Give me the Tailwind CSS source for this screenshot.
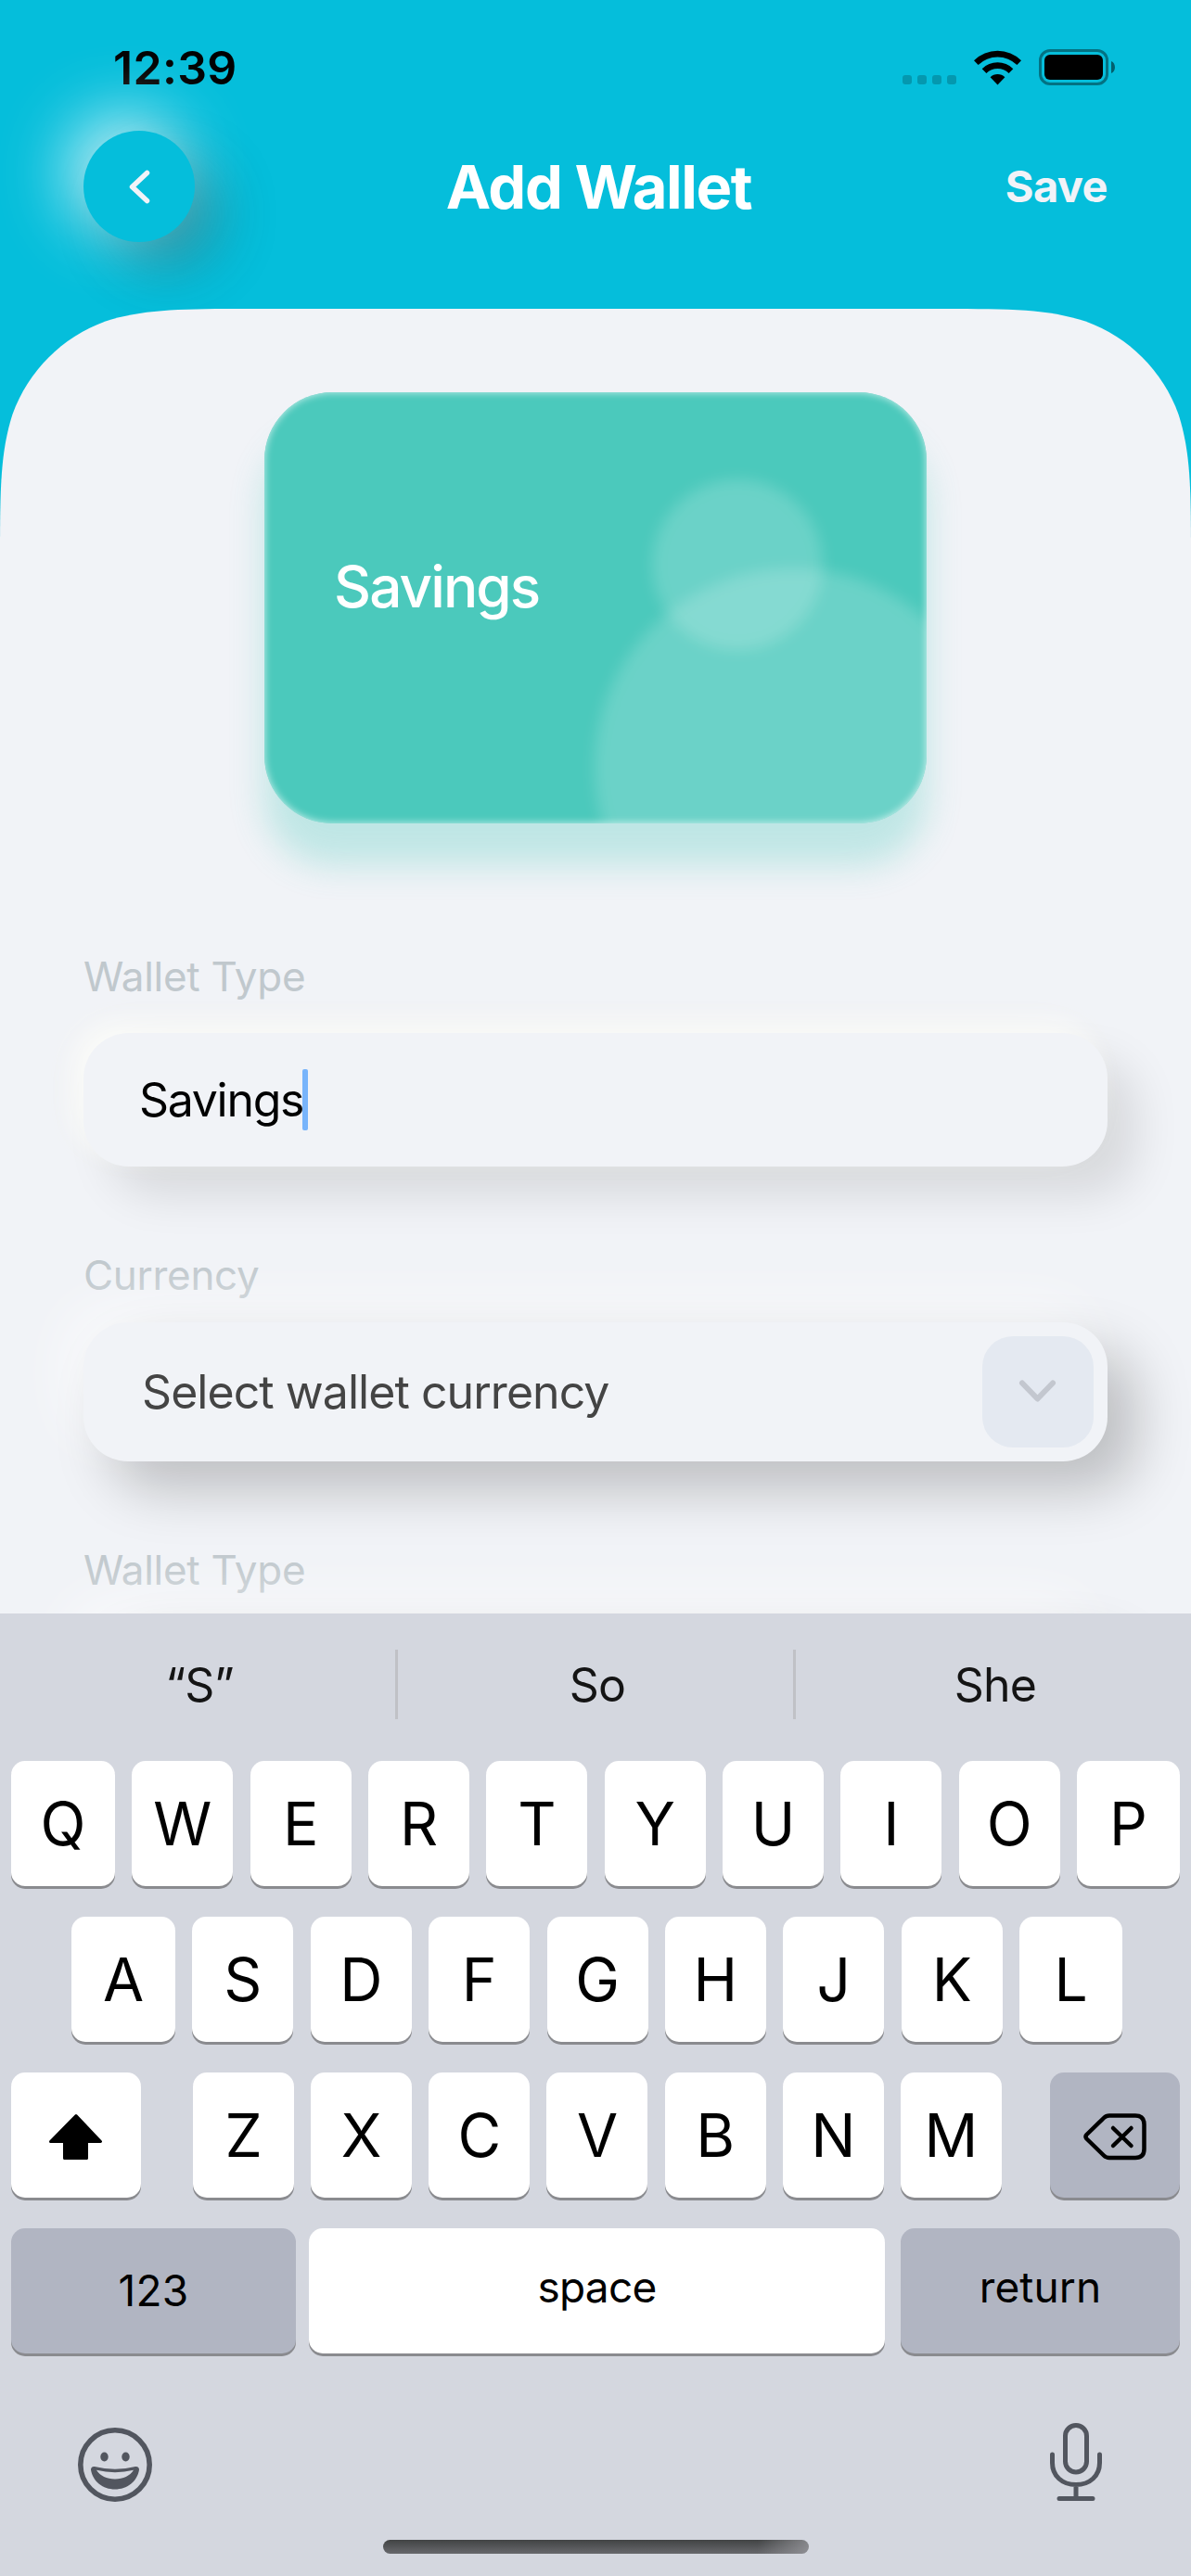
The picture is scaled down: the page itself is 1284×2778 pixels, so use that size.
<!DOCTYPE html>
<html lang="en">
<head>
<meta charset="utf-8">
<title>Add Wallet</title>
<script src="https://cdn.jsdelivr.net/npm/@tailwindcss/browser@4"></script>
</head>
<body class="flex h-[2778px] w-[1284px] flex-col overflow-hidden bg-[#05bedb] font-['Inter','Liberation_Sans',sans-serif]">

<!-- Status bar -->
<div class="flex h-[141px] shrink-0 items-start justify-between pr-[82px] pl-[122px]">
  <div class="pt-[43px] text-[50px] leading-[60px] font-semibold tracking-[0.3px] text-black">12:39</div>
  <div class="flex pt-[53px]">
    <div class="mt-[28px] flex gap-[6px]">
      <span class="size-[10px] rounded-[3px] bg-black/20"></span>
      <span class="size-[10px] rounded-[3px] bg-black/20"></span>
      <span class="size-[10px] rounded-[3px] bg-black/20"></span>
      <span class="size-[10px] rounded-[3px] bg-black/20"></span>
    </div>
    <svg class="ml-[19px] h-[39px] w-[51px]" viewBox="0 0 51 39">
      <path d="M0 12.2A36.5 36.5 0 0 1 51 12.2L46.4 17A29.8 29.8 0 0 0 4.6 17Z" fill="#000"/>
      <path d="M8.7 21.2A24 24 0 0 1 42.3 21.2L37.6 26A17.4 17.4 0 0 0 13.4 26Z" fill="#000"/>
      <path d="M17.6 30.2A11.4 11.4 0 0 1 33.4 30.2L25.5 38.4Z" fill="#000"/>
    </svg>
    <svg class="ml-[19px] h-[39px] w-[82px]" viewBox="0 0 82 39">
      <rect x="1.5" y="1.5" width="72" height="36" rx="10.5" fill="none" stroke="#000" stroke-opacity=".4" stroke-width="3"/>
      <rect x="6" y="6" width="63" height="27" rx="6" fill="#000"/>
      <path d="M78 13C83.3 15 83.3 24 78 26Z" fill="#000" fill-opacity=".5"/>
    </svg>
  </div>
</div>

<!-- Header -->
<header class="grid h-[192px] shrink-0 grid-cols-[1fr_auto_1fr] items-start px-[90px]">
  <div class="flex size-[120px] items-center justify-center rounded-full bg-[#05bedb] shadow-[30px_30px_60px_rgba(70,70,70,0.33),-15px_-15px_75px_rgba(255,255,255,0.85)]">
    <svg class="size-[120px]" viewBox="0 0 120 120"><path d="M68.5 45.5 52.500 60.500 68.500 75.500" fill="none" stroke="#f1f3f8" stroke-width="5.500" stroke-linecap="round" stroke-linejoin="round"/></svg>
  </div>
  <h1 class="pl-[7px] text-[65px] leading-[121px] font-bold tracking-[-1.4px] text-white">Add Wallet</h1>
  <div class="text-right text-[47px] leading-[120px] font-bold tracking-[-0.6px] text-[#f1f3f8]">Save</div>
</header>

<!-- Content sheet -->
<main class="flex h-[1407px] shrink-0 flex-col bg-[#f1f3f7] px-[90px] pt-[90px] [clip-path:path('M0_275C0_196_0_156_13.5_113.7C30.4_67_67_30.400_113.700_13.500C156_0_196_0_275_0L1009_0C1088_0_1128_0_1170.3_13.5C1217_30.4_1253.6_67_1270.5_113.7C1284_156_1284_196_1284_275L1284_1407L0_1407Z')]">
  <div class="h-[465px] w-[714px] shrink-0 self-center rounded-[73px] shadow-[0_45px_36px_rgba(75,201,188,0.3)]">
    <div class="relative flex h-full items-center overflow-hidden rounded-[73px] bg-[#4bc9bc] pl-[75px]">
      <div class="absolute top-[94px] left-[418px] size-[184px] rounded-full bg-white/18 blur-[8px]"></div>
      <div class="absolute top-[190px] left-[356px] size-[428px] rounded-full bg-white/18 blur-[8px]"></div>
      <div class="absolute inset-0 rounded-[73px] shadow-[inset_0_0_8px_rgba(255,255,255,0.75)]"></div>
      <div class="relative pb-[45px] text-[62px] leading-[76px] font-medium tracking-[-1.9px] text-white">Savings</div>
    </div>
  </div>

  <div class="mt-[135px] text-[44px] leading-[60px] tracking-[-0.3px] text-[#c0c8cd]">Wallet Type</div>
  <div class="mt-[31px] flex h-[144px] shrink-0 items-center rounded-[49px] bg-[#f1f3f7] pl-[60px] shadow-[-12px_-12px_30px_rgba(255,255,250,0.75),30px_30px_50px_rgba(0,0,0,0.11),-10px_-10px_60px_rgba(0,0,0,0.02)]">
    <span class="text-[50px] leading-[60px] tracking-[-1.3px] text-black">Savings</span>
    <span class="-ml-px h-[66px] w-[6px] rounded-[2px] bg-[#78b4fb]"></span>
  </div>

  <div class="mt-[87px] text-[44px] leading-[60px] tracking-[-0.3px] text-[#c0c8cd]">Currency</div>
  <div class="mt-[21px] flex h-[150px] shrink-0 items-center justify-between rounded-[48px] bg-[#f1f3f7] pr-[15px] pl-[63px] shadow-[30px_30px_60px_rgba(0,0,0,0.22),-20px_-20px_60px_rgba(255,255,255,0.6)]">
    <span class="text-[50px] leading-[60px] tracking-[-0.95px] text-[#444444]">Select wallet currency</span>
    <span class="flex size-[120px] items-center justify-center rounded-[33px] bg-[#e4e9f1]">
      <svg class="size-[120px]" viewBox="0 0 120 120"><path d="M43 50.500 59.500 67.500 76 50.500" fill="none" stroke="#c3c7cf" stroke-width="6" stroke-linecap="round" stroke-linejoin="round"/></svg>
    </span>
  </div>

  <div class="mt-[87px] text-[44px] leading-[60px] tracking-[-0.3px] text-[#c0c8cd]">Wallet Type</div>
  <div class="mt-[20px] h-[149px] shrink-0 rounded-[48px] bg-[#f1f3f7] shadow-[30px_30px_60px_rgba(0,0,0,0.2),-20px_-20px_60px_rgba(255,255,255,0.6)]"></div>
</main>

<!-- Keyboard -->
<section class="flex h-[1038px] shrink-0 flex-col bg-[#d4d7df] text-black">
  <div class="flex h-[159px] items-center pb-[6px] text-center text-[50px] leading-[60px] tracking-[-0.8px] text-[#141414]">
    <span class="flex-1 pl-[4px]">“S”</span>
    <span class="h-[75px] w-[3px] bg-[#c0c1c6]"></span>
    <span class="flex-1 pl-[4px]">So</span>
    <span class="h-[75px] w-[3px] bg-[#c0c1c6]"></span>
    <span class="flex-1 pl-[4px]">She</span>
  </div>

  <div class="flex flex-col gap-[33px] px-[12px] text-center text-[64px] leading-[135px]">
    <div class="flex justify-between *:h-[135px] *:w-[109px] *:rounded-[15px] *:bg-white *:shadow-[0_3px_0_#8a8b8f]">
      <span class="first:w-[112px]">Q</span><span>W</span><span>E</span><span>R</span><span>T</span><span>Y</span><span>U</span><span>I</span><span>O</span><span class="last:w-[111px]">P</span>
    </div>
    <div class="flex justify-between pr-[62px] pl-[65px] *:h-[135px] *:w-[109px] *:rounded-[15px] *:bg-white *:shadow-[0_3px_0_#8a8b8f]">
      <span class="first:w-[112px]">A</span><span>S</span><span>D</span><span>F</span><span>G</span><span>H</span><span>J</span><span>K</span><span class="last:w-[111px]">L</span>
    </div>
    <div class="flex justify-between">
      <span class="h-[135px] w-[140px] rounded-[15px] bg-white shadow-[0_3px_0_#8a8b8f]">
        <svg class="h-[135px] w-[140px]" viewBox="0 0 140 135"><path d="M70 46.500 96.500 74.500H81.500V92.500H57.500V74.500H42.500Z" fill="#000" stroke="#000" stroke-width="3" stroke-linejoin="round"/></svg>
      </span>
      <div class="ml-[4px] flex w-[872px] justify-between *:h-[135px] *:w-[109px] *:rounded-[15px] *:bg-white *:shadow-[0_3px_0_#8a8b8f]">
        <span>Z</span><span>X</span><span>C</span><span>V</span><span>B</span><span>N</span><span>M</span>
      </div>
      <span class="h-[135px] w-[140px] rounded-[15px] bg-[#b1b5c2] shadow-[0_3px_0_#8a8b8f]">
        <svg class="h-[135px] w-[140px]" viewBox="0 0 140 135" fill="none" stroke="#000" stroke-width="4.500" stroke-linecap="round" stroke-linejoin="round">
          <path d="M64 46.500H92Q101.500 46.500 101.500 56V82.500Q101.500 92 92 92H64Q60.500 92 58 89.500L39.500 71.500Q37.500 69.200 39.500 67L58 49Q60.500 46.500 64 46.500Z"/>
          <path d="M68 60 87.500 79M87.500 60 68 79"/>
        </svg>
      </span>
    </div>
    <div class="flex text-[46px]">
      <span class="h-[135px] w-[307px] rounded-[15px] bg-[#b1b5c2] shadow-[0_3px_0_#8a8b8f] tracking-[0.2px]">123</span>
      <span class="ml-[14px] h-[135px] w-[621px] rounded-[15px] bg-white leading-[126px] shadow-[0_3px_0_#8a8b8f] tracking-[-0.8px]">space</span>
      <span class="ml-auto h-[135px] w-[301px] rounded-[15px] bg-[#b1b5c2] leading-[126px] shadow-[0_3px_0_#8a8b8f] tracking-[0.1px]">return</span>
    </div>
  </div>

  <div class="flex h-[201px] items-start justify-between pt-[75px] pr-[96px] pl-[84px]">
    <svg class="mt-[5px] size-[80px]" viewBox="0 0 80 80">
      <circle cx="40" cy="40" r="37.200" fill="none" stroke="#52565f" stroke-width="5.600"/>
      <ellipse cx="28.500" cy="31.500" rx="4.200" ry="5" fill="#52565f"/>
      <ellipse cx="51.500" cy="31.500" rx="4.200" ry="5" fill="#52565f"/>
      <path d="M18 42Q40 47.500 62 42Q66 41.600 66 45.500C64 58 53 66.500 40 66.500C27 66.500 16 58 14 45.500Q14 41.600 18 42ZM20 45.800C24 52 31 55.500 40 55.500C49 55.500 56 52 60 45.800Q40 50.500 20 45.800Z" fill="#52565f" fill-rule="evenodd"/>
    </svg>
    <svg class="h-[85px] w-[56px]" viewBox="0 0 56 85" fill="none" stroke="#52565f" stroke-width="5" stroke-linecap="round">
      <rect x="16.500" y="2.500" width="23" height="50.500" rx="11.500"/>
      <path d="M2.500 34V43C2.500 57 13 66.500 28 66.500C43 66.500 53.500 57 53.500 43V34M28 66.500V81.500M10 81.500H46"/>
    </svg>
  </div>
  <div class="ml-[413px] h-[15px] w-[459px] rounded-full bg-[linear-gradient(to_right,transparent_88%,rgba(160,160,165,0.7)),linear-gradient(#414344,#68696d)]"></div>
</section>
</body>
</html>
